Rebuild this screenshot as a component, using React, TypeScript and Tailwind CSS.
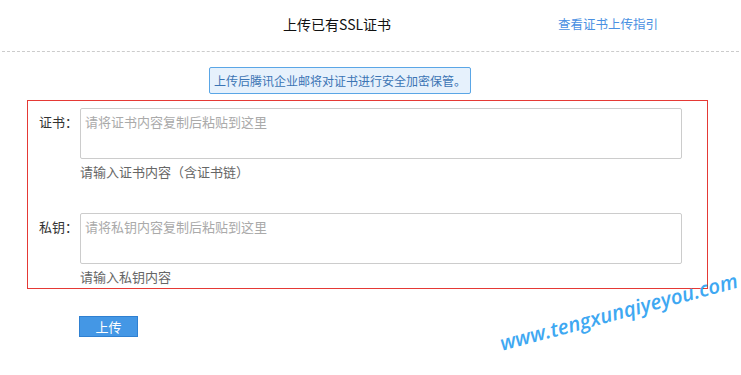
import React from 'react';

const cn = '"Noto Sans CJK SC", "Liberation Sans", sans-serif';

interface FieldProps {
  label: string;
  placeholder: string;
  hint: string;
}

const Field: React.FC<FieldProps> = ({ label, placeholder, hint }) => (
  <div className="flex">
    <div className="w-[52px] shrink-0 pt-[4px] pr-[2px] text-right text-[13px] leading-[20px] text-[#333]">
      {label}
    </div>
    <div className="flex flex-col">
      <textarea
        placeholder={placeholder}
        className="h-[51px] w-[602px] resize-none rounded-[2px] border border-[#cccccc] px-[4px] py-[3px] text-[13px] leading-[20px] text-[#333] outline-none placeholder:text-[#aaaaaa]"
        style={{ fontFamily: cn }}
      />
      <div className="mt-[5px] text-[13px] leading-[16px] text-[#666]">{hint}</div>
    </div>
  </div>
);

export default function App() {
  return (
    <div className="relative h-[375px] w-[741px] overflow-hidden bg-white" style={{ fontFamily: cn }}>
      <div className="mx-[2px] flex h-[52px] items-center border-b border-dashed border-[#cccccc] pb-[2px] pl-[281px]">
        <span className="text-[14px] text-[#111]">上传已有SSL证书</span>
        <a className="ml-[167px] text-[12.5px] text-[#4a90e2]">查看证书上传指引</a>
      </div>

      <div className="ml-[209px] mt-[15px] flex h-[27px] w-[262px] items-center justify-center rounded-[2px] border border-[#5aa6e6] bg-[#e6f1fc] text-[12px] text-[#3b74b4]">
        上传后腾讯企业邮将对证书进行安全加密保管。
      </div>

      <div className="ml-[27px] mt-[6px] flex h-[189px] w-[681px] flex-col gap-[33px] border border-[#e53935] pt-[7px]">
        <Field label="证书：" placeholder="请将证书内容复制后粘贴到这里" hint="请输入证书内容（含证书链）" />
        <Field label="私钥：" placeholder="请将私钥内容复制后粘贴到这里" hint="请输入私钥内容" />
      </div>

      <button className="ml-[79px] mt-[27px] flex h-[21px] w-[59px] items-center justify-center border border-[#2f80d1] bg-[#4497e5] text-[13px] text-white">
        上传
      </button>

      <div
        className="absolute left-[496px] top-[298px] w-[240px] -rotate-[15deg] whitespace-nowrap text-center text-[20.5px] font-semibold italic leading-[28px] text-[#3ea8f2]"
        style={{ fontFamily: '"Open Sans", sans-serif' }}
      >
        www.tengxunqiyeyou.com
      </div>
    </div>
  );
}
